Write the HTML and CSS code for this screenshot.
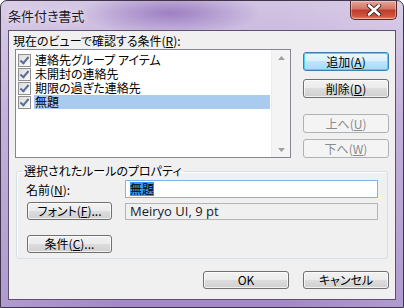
FILE: index.html
```html
<!DOCTYPE html>
<html lang="ja">
<head>
    <meta charset="UTF-8">
    <title>条件付き書式</title>
    <link rel="stylesheet" href="styles.css">
</head>
<body>

    <div class="window">

        <!-- Title Bar -->
        <div class="titlebar">
            <span class="title">条件付き書式</span>
            <div class="close-btn">
                <svg width="16" height="12" viewBox="0 0 16 12">
                    <path d="M3 1.5 L13 10.5 M13 1.5 L3 10.5" stroke="#3a2a2a" stroke-width="4.4" stroke-linecap="round"/>
                    <path d="M3 1.5 L13 10.5 M13 1.5 L3 10.5" stroke="#ffffff" stroke-width="2.6" stroke-linecap="round"/>
                </svg>
            </div>
        </div>

        <!-- Client Area -->
        <div class="client">

            <div class="top-row">
                <div class="cond-col">
                    <div class="cond-label">現在のビューで確認する条件(<u>R</u>):</div>
                    <div class="listbox">
                        <div class="items">
                            <div class="item"><span class="check"></span><span class="item-text">連絡先グループ アイテム</span></div>
                            <div class="item"><span class="check"></span><span class="item-text">未開封の連絡先</span></div>
                            <div class="item"><span class="check"></span><span class="item-text">期限の過ぎた連絡先</span></div>
                            <div class="item selected"><span class="check"></span><span class="item-text">無題</span></div>
                        </div>
                        <div class="scrollbar">
                            <svg width="7" height="4" viewBox="0 0 7 4"><path d="M0 4 L3.5 0 L7 4 Z" fill="#a0a0a0"/></svg>
                            <svg width="7" height="4" viewBox="0 0 7 4"><path d="M0 0 L3.5 4 L7 0 Z" fill="#a0a0a0"/></svg>
                        </div>
                    </div>
                </div>

                <div class="side-buttons">
                    <button class="btn default">追加(<u>A</u>)</button>
                    <button class="btn">削除(<u>D</u>)</button>
                    <button class="btn disabled up">上へ(<u>U</u>)</button>
                    <button class="btn disabled down">下へ(<u>W</u>)</button>
                </div>
            </div>

            <!-- Rule Properties -->
            <fieldset class="props">
                <legend>選択されたルールのプロパティ</legend>
                <div class="prop-row">
                    <span class="prop-label">名前(<u>N</u>):</span>
                    <div class="textbox focused"><span class="sel">無題</span></div>
                </div>
                <div class="prop-row">
                    <button class="btn small">フォント(<u>F</u>)...</button>
                    <div class="textbox readonly">Meiryo UI, 9 pt</div>
                </div>
                <div class="prop-row cond-row">
                    <button class="btn small">条件(<u>C</u>)...</button>
                </div>
            </fieldset>

            <div class="bottom-row">
                <button class="btn">OK</button>
                <button class="btn">キャンセル</button>
            </div>

        </div>
    </div>

</body>
</html>
```

FILE: styles.css
```css
/* Page */
body {
    margin: 0;
    font-family: "Noto Sans CJK JP", "Noto Sans", sans-serif;
    font-size: 12px;
    color: #000;
    background: #fff;
}

u {
    text-decoration: underline;
    text-underline-offset: 1px;
}

/* Window Frame */
.window {
    width: 404px;
    height: 308px;
    box-sizing: border-box;
    border: 1px solid #3e3548;
    border-radius: 7px 7px 0 0;
    background:
        radial-gradient(ellipse 90px 22px at 170px 12px, rgba(140, 105, 185, 0.75), transparent),
        linear-gradient(to right, rgba(255, 255, 255, 0.15), transparent 30%, transparent 70%, rgba(255, 255, 255, 0.15)),
        linear-gradient(to bottom, #d2c4e3, #b9a2d4 40%, #a289c6);
    display: flex;
    flex-direction: column;
    padding: 0 7px 7px 7px;
}

/* Title Bar */
.titlebar {
    height: 29px;
    display: flex;
    justify-content: space-between;
    align-items: flex-start;
}

.title {
    font-size: 13px;
    line-height: 16px;
    margin-top: 7px;
    color: #1b1b2a;
    font-feature-settings: "palt";
    text-shadow: 0 0 6px rgba(255, 255, 255, 0.9);
}

.close-btn {
    width: 45px;
    height: 18px;
    margin-right: -1px;
    border: 1px solid #5a2a2a;
    border-top: none;
    border-radius: 0 0 5px 5px;
    background: linear-gradient(to bottom, #e7a597, #d27463 45%, #c0392b 50%, #d0553e 85%, #e58a6a);
    display: flex;
    align-items: center;
    justify-content: center;
    box-shadow: inset 0 0 0 1px rgba(255, 255, 255, 0.35);
}

/* Client Area */
.client {
    flex: 1;
    background: #f0f0f0;
    border: 1px solid #5d4f6e;
    display: flex;
    flex-direction: column;
}

.top-row {
    display: flex;
    margin-top: 2px;
}

.cond-col {
    padding-left: 4px;
}

.cond-label {
    line-height: 16px;
    height: 16px;
    font-feature-settings: "palt";
}

/* List Box */
.listbox {
    margin-left: 2px;
    width: 276px;
    height: 109px;
    box-sizing: border-box;
    border: 1px solid #828790;
    background: #fff;
    display: flex;
}

.items {
    flex: 1;
    padding: 3px 1px 0 2px;
}

.item {
    display: flex;
    align-items: center;
    height: 14px;
}

.check {
    width: 13px;
    height: 13px;
    box-sizing: border-box;
    border: 1px solid #8f8f8f;
    background: linear-gradient(135deg, #dcdcdc, #fbfbfb);
    margin-right: 3px;
    position: relative;
}

.check::after {
    content: "";
    position: absolute;
    left: 3px;
    top: 0px;
    width: 3px;
    height: 7px;
    border: solid #5a6d96;
    border-width: 0 2px 2px 0;
    transform: rotate(40deg);
}

.item-text {
    flex: 1;
    height: 14px;
    line-height: 14px;
    padding-left: 1px;
    font-feature-settings: "palt";
}

.item.selected .item-text {
    background: #a9cbee;
}

.scrollbar {
    width: 18px;
    background: #f4f4f4;
    border-left: 1px solid #ececec;
    display: flex;
    flex-direction: column;
    justify-content: space-between;
    align-items: center;
    padding: 6px 0 5px;
}

/* Buttons */
.btn {
    font-family: inherit;
    font-size: 12px;
    line-height: 14px;
    padding: 0;
    color: #000;
    border: 1px solid #707070;
    border-radius: 3px;
    background: linear-gradient(to bottom, #f2f2f2, #ebebeb 49%, #dddddd 50%, #cfcfcf);
    box-shadow: inset 0 0 0 1px rgba(255, 255, 255, 0.7);
    width: 86px;
    height: 19px;
    font-feature-settings: "palt";
}

.btn.default {
    border-color: #3c7fb1;
    background: linear-gradient(to bottom, #eaf6fd, #d9f0fc 49%, #bee6fd 50%, #a7d9f5);
    box-shadow: inset 0 0 0 1px #48d6fb;
}

.btn.disabled {
    color: #8b8b8b;
    border-color: #adb2b5;
    background: #f4f4f4;
    box-shadow: none;
}

.side-buttons {
    display: flex;
    flex-direction: column;
    margin-left: 12px;
    margin-top: 19px;
}

.side-buttons .btn + .btn {
    margin-top: 8px;
}

.side-buttons .btn.up {
    margin-top: 16px;
}

.side-buttons .btn.down {
    margin-top: 6px;
}

/* Properties Group */
.props {
    margin: 5px 0 0 7px;
    width: 372px;
    box-sizing: border-box;
    border: 1px solid #d5dfe5;
    border-radius: 3px;
    padding: 1px 0 5px 9px;
    box-shadow: inset 1px 1px 0 #fff;
}

.props legend {
    padding: 0 2px;
    margin-left: -4px;
    line-height: 16px;
    font-feature-settings: "palt";
}

.prop-row {
    display: flex;
    align-items: center;
}

.prop-row + .prop-row {
    margin-top: 4px;
}

.prop-row.cond-row {
    margin-top: 15px;
}

.prop-label {
    width: 99px;
    font-feature-settings: "palt";
}

.btn.small {
    width: 85px;
    height: 18px;
    margin-left: 1px;
    margin-right: 13px;
}

.textbox {
    width: 253px;
    height: 18px;
    box-sizing: border-box;
    border: 1px solid #abadb3;
    background: #fff;
    padding-left: 4px;
    line-height: 16px;
}

.textbox.focused {
    border-color: #7eb4ea;
}

.textbox .sel {
    background: #3399ff;
    color: #000;
    display: inline-block;
    height: 14px;
    line-height: 14px;
    margin-top: 1px;
}

.textbox.readonly {
    background: #f0f0f0;
    border-color: #b4b4b4;
    font-family: "Open Sans", "Noto Sans", sans-serif;
    font-size: 13px;
    color: #1a1a2a;
    height: 17px;
    line-height: 15px;
}

/* Bottom Buttons */
.bottom-row {
    display: flex;
    justify-content: flex-end;
    gap: 14px;
    margin-top: 12px;
    padding-right: 6px;
}

.bottom-row .btn {
    height: 18px;
}
```
